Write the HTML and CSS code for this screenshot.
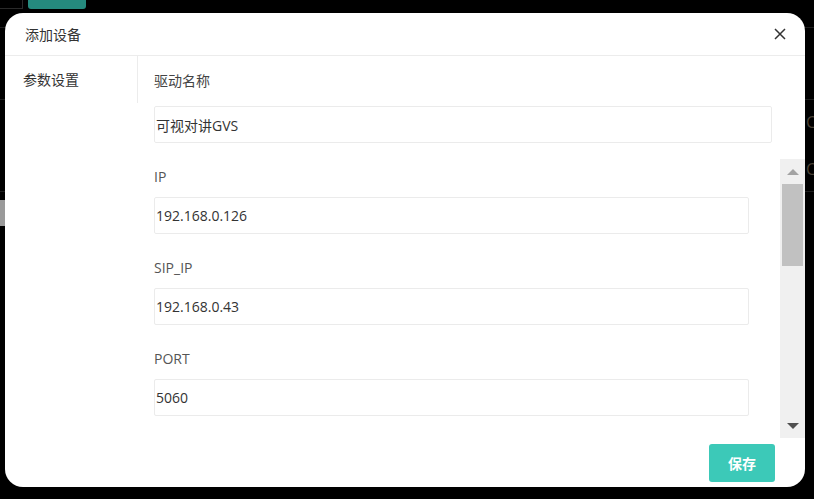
FILE: index.html
```html
<!DOCTYPE html>
<html lang="zh-CN">
<head>
<meta charset="utf-8">
<title>添加设备</title>
<link rel="stylesheet" href="styles.css">
</head>
<body>
<div class="page">
  <div class="topbar">
    <div class="top-cell"></div>
    <div class="top-btn"></div>
  </div>
  <div class="bg-row r1"></div>
  <div class="bg-row r2"></div>
  <div class="bg-row r3">
    <span class="bg-text">C</span>
    <span class="bg-text">C</span>
  </div>
  <div class="bg-row r4"><div class="bg-block"></div></div>
</div>

<div class="modal">
  <div class="modal-header">
    <span class="modal-title">添加设备</span>
    <button class="close" aria-label="关闭">
      <svg width="12" height="12" viewBox="0 0 12 12"><path d="M1 1L11 11M11 1L1 11" stroke="#333" stroke-width="1.5" fill="none"/></svg>
    </button>
  </div>
  <div class="modal-body">
    <div class="side">
      <div class="side-item">参数设置</div>
    </div>
    <div class="main">
      <div class="field fixed">
        <div class="label first">驱动名称</div>
        <div class="input">可视对讲GVS</div>
      </div>
      <div class="scroll-wrap">
        <div class="scroll">
          <div class="field"><div class="label">IP</div><div class="input">192.168.0.126</div></div>
          <div class="field"><div class="label">SIP_IP</div><div class="input">192.168.0.43</div></div>
          <div class="field"><div class="label">PORT</div><div class="input">5060</div></div>
        </div>
        <div class="scrollbar">
          <div class="sb-btn"><span class="arrow-up"></span></div>
          <div class="sb-track"><div class="sb-thumb"></div></div>
          <div class="sb-btn"><span class="arrow-down"></span></div>
        </div>
      </div>
      <div class="footer">
        <button class="save">保存</button>
      </div>
    </div>
  </div>
</div>
</body>
</html>
```
FILE: styles.css
```css
html, body {
  margin: 0;
  padding: 0;
  background: #000;
}
body {
  width: 814px;
  height: 499px;
  overflow: hidden;
  font-family: "Open Sans", "Noto Sans CJK SC", sans-serif;
  font-size: 14px;
  color: #333;
}

/* dimmed page behind the dialog */
.page {
  width: 814px;
}
.topbar {
  display: flex;
  height: 9px;
}
.top-cell {
  width: 22px;
  border-right: 1px solid #2a2a2a;
  border-bottom: 1px solid #2a2a2a;
}
.top-btn {
  width: 58px;
  margin-left: 5px;
  height: 9px;
  background: #258a7e;
  border-radius: 0 0 3px 3px;
}
.bg-row {
  border-bottom: 1px solid #1e1e1e;
  box-sizing: border-box;
}
.r1 { height: 19px; }
.r2 { height: 72px; }
.r3 {
  height: 92px;
  display: flex;
  flex-direction: column;
  padding-top: 12px;
  gap: 26px;
}
.bg-text {
  padding-left: 806px;
  color: #4a4236;
  font-size: 16px;
  line-height: 21px;
  white-space: nowrap;
}
.r4 {
  height: 60px;
  padding-top: 8px;
  border-bottom: none;
}
.bg-block {
  width: 5px;
  height: 26px;
  background: #9a9a9a;
}

/* dialog */
.modal {
  position: absolute;
  left: 5px;
  top: 13px;
  width: 800px;
  height: 474px;
  background: #fff;
  border-radius: 18px;
  overflow: hidden;
  display: flex;
  flex-direction: column;
}
.modal-header {
  height: 42px;
  border-bottom: 1px solid #ececec;
  display: flex;
  align-items: center;
  justify-content: space-between;
  padding: 0 18px 0 20px;
  flex: none;
}
.modal-title {
  font-size: 14px;
  color: #333;
}
.close {
  border: none;
  background: none;
  padding: 0;
  width: 14px;
  height: 14px;
  display: flex;
  align-items: center;
  justify-content: center;
  cursor: pointer;
}
.modal-body {
  flex: 1;
  display: flex;
  min-height: 0;
}
.side {
  width: 133px;
  flex: none;
  align-self: flex-start;
  border-right: 1px solid #ececec;
  padding: 13px 0 12px 18px;
  box-sizing: border-box;
}
.side-item {
  line-height: 22px;
  color: #333;
}
.main {
  flex: 1;
  display: flex;
  flex-direction: column;
  min-width: 0;
}
.fixed {
  padding: 14px 33px 0 16px;
  margin-bottom: 16px;
}
.label {
  line-height: 20px;
  margin-bottom: 10px;
  color: #555;
}
.label.first {
  line-height: 22px;
  margin-bottom: 14px;
  color: #444;
}
.input {
  height: 37px;
  box-sizing: border-box;
  border: 1px solid #ebebeb;
  border-radius: 2px;
  padding: 0 1px;
  display: flex;
  align-items: center;
  color: #333;
}
.scroll-wrap {
  height: 279px;
  flex: none;
  display: flex;
}
.scroll {
  flex: 1;
  overflow: hidden;
  padding: 8px 31px 0 16px;
}
.scroll .field {
  margin-bottom: 24px;
}
.scrollbar {
  width: 25px;
  flex: none;
  background: #f0f0f0;
  display: flex;
  flex-direction: column;
}
.sb-btn {
  height: 25px;
  flex: none;
  display: flex;
  align-items: center;
  justify-content: center;
}
.arrow-up {
  width: 0;
  height: 0;
  border-left: 6px solid transparent;
  border-right: 6px solid transparent;
  border-bottom: 6px solid #a3a3a3;
}
.arrow-down {
  width: 0;
  height: 0;
  border-left: 6px solid transparent;
  border-right: 6px solid transparent;
  border-top: 6px solid #505050;
}
.sb-track {
  flex: 1;
  padding: 0 2px;
}
.sb-thumb {
  height: 82px;
  background: #c1c1c1;
}
.footer {
  flex: 1;
  display: flex;
  justify-content: flex-end;
  align-items: flex-start;
  padding: 6px 30px 0 0;
}
.save {
  width: 66px;
  height: 38px;
  border: none;
  border-radius: 3px;
  background: #3cc9b8;
  color: #fff;
  font-family: "Noto Sans CJK SC", sans-serif;
  font-size: 14px;
  font-weight: 700;
  cursor: pointer;
}
```
